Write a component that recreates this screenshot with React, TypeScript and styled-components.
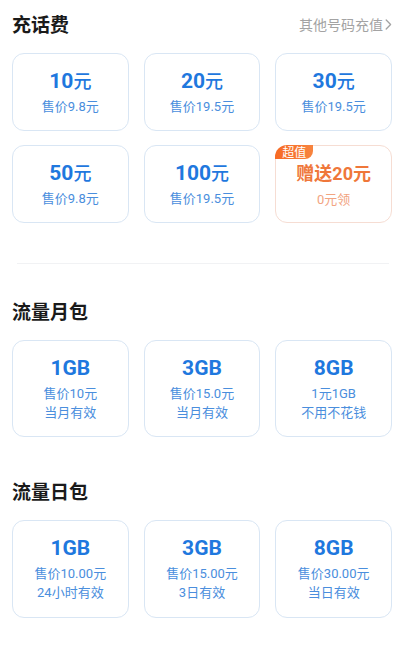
import React from "react";
import styled, { createGlobalStyle } from "styled-components";

const Global = createGlobalStyle`
  html, body { margin: 0; padding: 0; background: #ffffff; }
  body { font-family: Roboto, "Noto Sans CJK SC", sans-serif; -webkit-font-smoothing: antialiased; }
`;

const Page = styled.div`
  padding: 11px 15px 20px 12px;
  display: flex;
  flex-direction: column;
`;

const Section = styled.section<{ $gapTop?: number }>`
  display: flex;
  flex-direction: column;
  margin-top: ${(p) => p.$gapTop ?? 0}px;
`;

const HeaderRow = styled.div`
  display: flex;
  align-items: center;
  justify-content: space-between;
  height: 26px;
  margin-bottom: 16px;
`;

const Title = styled.h2`
  margin: 0;
  font-family: "Noto Sans CJK SC", sans-serif;
  font-size: 19px;
  line-height: 26px;
  font-weight: 700;
  color: #1a1a1a;
`;

const MoreLink = styled.a`
  display: flex;
  align-items: center;
  gap: 2px;
  font-family: "Noto Sans CJK SC", sans-serif;
  font-size: 14px;
  color: #a3a3a3;
  text-decoration: none;
`;

const Grid = styled.div`
  display: grid;
  grid-template-columns: repeat(3, 1fr);
  column-gap: 15px;
  row-gap: 14px;
`;

const Card = styled.div<{ $height: number; $hot?: boolean }>`
  position: relative;
  height: ${(p) => p.$height}px;
  box-sizing: border-box;
  border: 1px solid ${(p) => (p.$hot ? "#f6ddd3" : "#d9e6f4")};
  border-radius: 12px;
  background: #fff;
  display: flex;
  flex-direction: column;
  align-items: center;
  justify-content: center;
`;

const Main = styled.div<{ $hot?: boolean }>`
  font-family: Roboto, "Noto Sans CJK SC", sans-serif;
  font-size: ${(p) => (p.$hot ? 18 : 21)}px;
  line-height: 24px;
  font-weight: 700;
  color: ${(p) => (p.$hot ? "#ef773a" : "#1f78de")};
  margin-bottom: 4px;
  white-space: nowrap;
`;

const Unit = styled.span<{ $hot?: boolean }>`
  font-family: "Noto Sans CJK SC", sans-serif;
  font-size: 18px;
  font-weight: ${(p) => (p.$hot ? 700 : 500)};
`;

const Sub = styled.div<{ $hot?: boolean }>`
  font-family: Roboto, "Noto Sans CJK SC", sans-serif;
  font-size: 13px;
  line-height: 19px;
  font-weight: 400;
  color: ${(p) => (p.$hot ? "#f2a481" : "#4a8edd")};
  white-space: nowrap;
`;

const Badge = styled.span`
  position: absolute;
  top: -1px;
  left: -1px;
  height: 14px;
  padding: 0 7px;
  display: flex;
  align-items: center;
  background: linear-gradient(90deg, #f76a24, #f7843f);
  color: #fff;
  font-family: "Noto Sans CJK SC", sans-serif;
  font-size: 12px;
  line-height: 14px;
  border-radius: 12px 0 8px 0;
`;

const Divider = styled.hr`
  margin: 40px 3px 0 5px;
  border: none;
  height: 1px;
  background: #f1f2f4;
`;

const Chevron = () => (
  <svg width="7" height="11" viewBox="0 0 7 11" fill="none">
    <path d="M1.2 1 L5.6 5.5 L1.2 10" stroke="#a3a3a3" strokeWidth="1.3" strokeLinecap="round" strokeLinejoin="round" />
  </svg>
);

type Item = { num: string; unit?: string; subs: string[] };

const recharge: Item[] = [
  { num: "10", unit: "元", subs: ["售价9.8元"] },
  { num: "20", unit: "元", subs: ["售价19.5元"] },
  { num: "30", unit: "元", subs: ["售价19.5元"] },
  { num: "50", unit: "元", subs: ["售价9.8元"] },
  { num: "100", unit: "元", subs: ["售价19.5元"] },
];

const monthly: Item[] = [
  { num: "1GB", subs: ["售价10元", "当月有效"] },
  { num: "3GB", subs: ["售价15.0元", "当月有效"] },
  { num: "8GB", subs: ["1元1GB", "不用不花钱"] },
];

const daily: Item[] = [
  { num: "1GB", subs: ["售价10.00元", "24小时有效"] },
  { num: "3GB", subs: ["售价15.00元", "3日有效"] },
  { num: "8GB", subs: ["售价30.00元", "当日有效"] },
];

const Product = ({ item, height }: { item: Item; height: number }) => (
  <Card $height={height}>
    <Main>
      {item.num}
      {item.unit && <Unit>{item.unit}</Unit>}
    </Main>
    {item.subs.map((s) => (
      <Sub key={s}>{s}</Sub>
    ))}
  </Card>
);

export default function App() {
  return (
    <>
      <Global />
      <Page>
        <Section>
          <HeaderRow>
            <Title>充话费</Title>
            <MoreLink href="#">
              其他号码充值
              <Chevron />
            </MoreLink>
          </HeaderRow>
          <Grid>
            {recharge.map((it) => (
              <Product key={it.num} item={it} height={78} />
            ))}
            <Card $height={78} $hot>
              <Badge>超值</Badge>
              <Main $hot>
                赠送20<Unit $hot>元</Unit>
              </Main>
              <Sub $hot>0元领</Sub>
            </Card>
          </Grid>
        </Section>
        <Divider />
        <Section $gapTop={34}>
          <HeaderRow>
            <Title>流量月包</Title>
          </HeaderRow>
          <Grid>
            {monthly.map((it) => (
              <Product key={it.num} item={it} height={97} />
            ))}
          </Grid>
        </Section>
        <Section $gapTop={41}>
          <HeaderRow>
            <Title>流量日包</Title>
          </HeaderRow>
          <Grid>
            {daily.map((it) => (
              <Product key={it.num} item={it} height={98} />
            ))}
          </Grid>
        </Section>
      </Page>
    </>
  );
}
